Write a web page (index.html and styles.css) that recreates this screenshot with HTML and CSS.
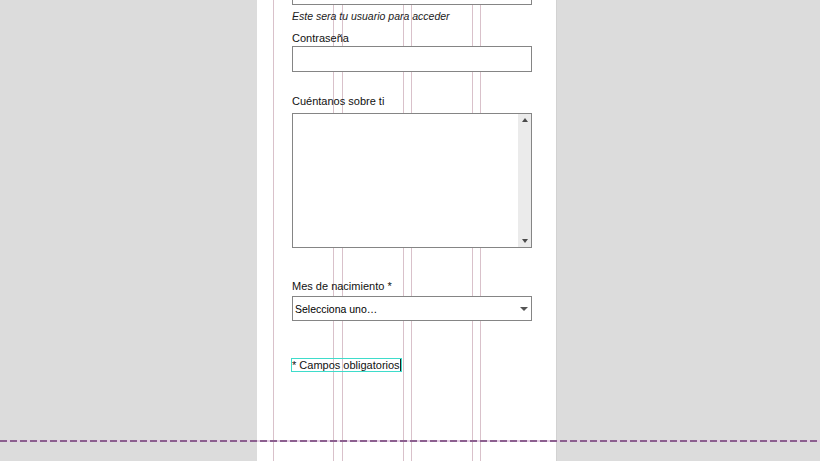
FILE: index.html
```html
<!DOCTYPE html>
<html lang="es">
<head>
<meta charset="utf-8">
<title>Formulario</title>
<link rel="stylesheet" href="styles.css">
</head>
<body>
<div class="viewport">
  <div class="page">
    <div class="grid">
      <form class="form">
        <input class="field field-first" type="text" aria-label="Usuario">
        <p class="hint">Este sera tu usuario para acceder</p>
        <label class="label label-pass" for="pass">Contraseña</label>
        <input class="field field-pass" id="pass" type="password">
        <label class="label label-about" for="about">Cuéntanos sobre ti</label>
        <div class="textbox">
          <textarea id="about" class="textarea"></textarea>
          <div class="scrolltrack">
            <span class="arrow arrow-up"></span>
            <span class="arrow arrow-down"></span>
          </div>
        </div>
        <label class="label label-month" for="month">Mes de nacimiento *</label>
        <div class="selectbox">
          <select id="month" class="select">
            <option>Selecciona uno…</option>
          </select>
          <span class="select-arrow"></span>
        </div>
        <p class="required"><span class="required-text">* Campos obligatorios</span></p>
      </form>
    </div>
  </div>
  <div class="fold"></div>
</div>
</body>
</html>
```
FILE: styles.css
```css
html, body {
  margin: 0;
  padding: 0;
  height: 100%;
}
body {
  background: #dcdcdc;
  font-family: "Liberation Sans", Arial, sans-serif;
  color: #111;
  overflow: hidden;
}
.viewport {
  position: relative;
  height: 461px;
  overflow: hidden;
}
.page {
  width: 300px;
  margin-left: 257px;
  height: 461px;
  background: #ffffff;
  padding: 0 16px;
  box-sizing: border-box;
  border-right: 1px solid #d2d2d2;
}
.grid {
  height: 100%;
  padding: 0 9px 0 19px;
  box-sizing: border-box;
  background-image:
    linear-gradient(#d9c1ca, #d9c1ca),
    linear-gradient(#d9c1ca, #d9c1ca),
    linear-gradient(#d9c1ca, #d9c1ca),
    linear-gradient(#d9c1ca, #d9c1ca),
    linear-gradient(#d9c1ca, #d9c1ca),
    linear-gradient(#d9c1ca, #d9c1ca),
    linear-gradient(#d9c1ca, #d9c1ca),
    linear-gradient(#d9c1ca, #d9c1ca);
  background-size: 1px 100%;
  background-repeat: no-repeat;
  background-position: 0 0, 60px 0, 69px 0, 130px 0, 138px 0, 199px 0, 207px 0, 267px 0;
}
.form {
  display: flex;
  flex-direction: column;
  width: 240px;
  margin: 0;
}
.field {
  display: block;
  height: 26px;
  box-sizing: border-box;
  border: 1px solid #858585;
  background: #fff;
  margin: 0;
  padding: 0 3px;
  font: 11px "Liberation Sans", Arial, sans-serif;
  outline: none;
  border-radius: 0;
}
.field-first {
  margin-top: -21px;
}
.hint {
  margin: 4px 0 0;
  font-size: 10.5px;
  line-height: 14px;
  font-style: italic;
  color: #1a1a1a;
}
.label {
  display: block;
  font-size: 11px;
  line-height: 14px;
  color: #111;
}
.label-pass {
  margin-top: 8px;
}
.field-pass {
  margin-top: 1px;
}
.label-about {
  margin-top: 22px;
}
.textbox {
  display: flex;
  margin-top: 5px;
  height: 135px;
  box-sizing: border-box;
  border: 1px solid #858585;
  background: #fff;
}
.textarea {
  flex: 1;
  border: 0;
  margin: 0;
  padding: 2px;
  resize: none;
  outline: none;
  background: transparent;
  font: 11px "Liberation Sans", Arial, sans-serif;
}
.scrolltrack {
  width: 13px;
  background: #ebebeb;
  display: flex;
  flex-direction: column;
  justify-content: space-between;
  align-items: center;
  padding: 4px 0 4px;
  box-sizing: border-box;
}
.arrow {
  width: 0;
  height: 0;
  border-left: 3.5px solid transparent;
  border-right: 3.5px solid transparent;
}
.arrow-up {
  border-bottom: 4px solid #4a4a4a;
}
.arrow-down {
  border-top: 4px solid #4a4a4a;
}
.label-month {
  margin-top: 31px;
}
.selectbox {
  position: relative;
  margin-top: 3px;
  display: flex;
}
.select {
  flex: 1;
  -webkit-appearance: none;
  appearance: none;
  height: 25px;
  box-sizing: border-box;
  border: 1px solid #858585;
  border-radius: 0;
  background: #fff;
  margin: 0;
  padding: 0 20px 0 2px;
  font: 10.5px "Liberation Sans", Arial, sans-serif;
  color: #000;
  outline: none;
}
.select-arrow {
  position: absolute;
  right: 4px;
  top: 11px;
  width: 0;
  height: 0;
  border-left: 4px solid transparent;
  border-right: 4px solid transparent;
  border-top: 4px solid #555;
  pointer-events: none;
}
.required {
  margin: 37px 0 0;
  font-size: 11px;
  line-height: 14px;
  color: #111;
}
.required-text {
  outline: 1px solid #3fdccb;
  outline-offset: 0;
  border-right: 1px solid #222;
}
.fold {
  position: absolute;
  left: 0;
  right: 0;
  top: 440px;
  height: 2px;
  background: repeating-linear-gradient(90deg, #8c5f8f 0, #8c5f8f 7px, #e3cde3 7px, #e3cde3 10px);
}
```
